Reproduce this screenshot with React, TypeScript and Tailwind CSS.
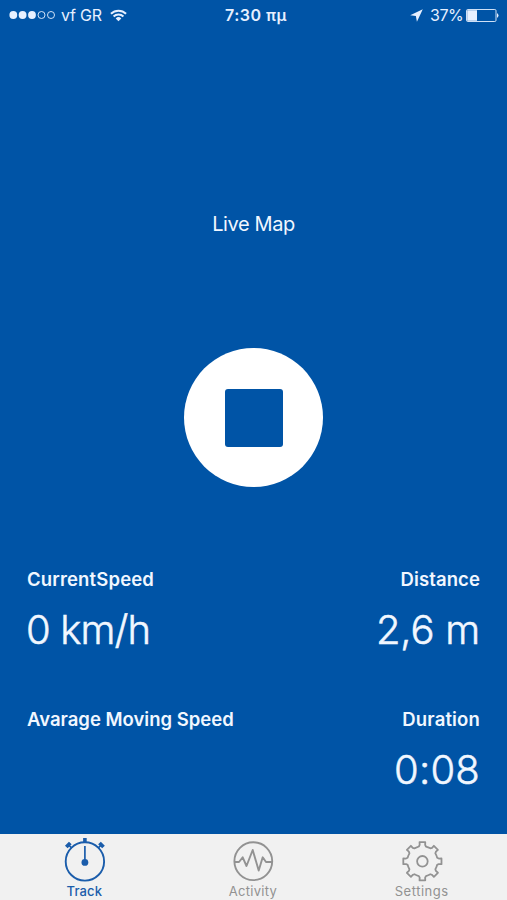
import React from "react";

function gearPath(): string {
  const parts: string[] = [];
  for (let i = 0; i < 8; i++) {
    const base = i * 45 - 90;
    const corners: [number, number][] = [
      [15.2, -13.5],
      [16.6, -9.5],
      [19.3, -8.5],
      [19.3, 8.5],
      [16.6, 9.5],
      [15.2, 13.5],
    ];
    corners.forEach(([r, a], k) => {
      const t = ((base + a) * Math.PI) / 180;
      const x = (22.4 + r * Math.cos(t)).toFixed(2);
      const y = (22.3 + r * Math.sin(t)).toFixed(2);
      const cmd = i === 0 && k === 0 ? "M" : k === 0 ? "A17 17 0 0 1 " : "L";
      parts.push(`${cmd}${x} ${y}`);
    });
  }
  return parts.join(" ") + "Z";
}

const TrackIcon = () => (
  <svg className="h-11 w-11 overflow-visible" viewBox="0 0 44 44" fill="none" stroke="currentColor">
    <circle cx="22.9" cy="22.4" r="19.2" strokeWidth="1.9" />
    <path d="M22.9 -1v4.5" strokeWidth="3.6" />
    <path d="M4.3 8l4-4M41.5 8l-4-4" strokeWidth="3.8" />
    <path d="M7.1 6.5l2.7 2.7M38.7 6.5l-2.7 2.7" strokeWidth="1.7" />
    <path d="M22.9 7v16" strokeWidth="1.7" />
    <circle cx="22.9" cy="23.4" r="3.4" fill="currentColor" stroke="none" />
  </svg>
);

const ActivityIcon = () => (
  <svg className="h-11 w-11" viewBox="0 0 44 44" fill="none" stroke="currentColor" strokeWidth="1.9" strokeLinejoin="round">
    <circle cx="22.3" cy="22.2" r="18.9" />
    <path d="M3.5 23H8L11.7 18.3L15.5 27L21.7 11L27.7 31.5L31.7 18.3L35 23H41.2" />
  </svg>
);

const SettingsIcon = () => (
  <svg className="h-11 w-11" viewBox="0 0 44 44" fill="none" stroke="currentColor" strokeWidth="1.8" strokeLinejoin="round">
    <path d={gearPath()} />
    <circle cx="22.4" cy="22.3" r="5.3" />
  </svg>
);

function StatusBar() {
  return (
    <header className="grid h-[30px] grid-cols-3 items-center pl-[9px] pr-[8px] text-[16px] leading-[30px] text-[#e7f0ff]">
      <div className="flex items-center">
        <svg className="h-[10px] w-[47px]" viewBox="0 0 47 10" fill="currentColor">
          <circle cx="4.3" cy="5" r="3.9" />
          <circle cx="13.6" cy="5" r="3.9" />
          <circle cx="23" cy="5" r="3.9" />
          <g fill="none" stroke="currentColor" strokeWidth="0.9">
            <circle cx="32.5" cy="5" r="3.5" />
            <circle cx="42" cy="5" r="3.5" />
          </g>
        </svg>
        <span className="ml-[5px] w-[41px] whitespace-nowrap tracking-[-0.2px]">vf GR</span>
        <svg className="ml-[8px] h-[13px] w-[17px]" viewBox="0 0 18 13" fill="none" stroke="currentColor" strokeWidth="2.1">
          <path d="M1 4.7A11.3 11.3 0 0 1 17 4.7" />
          <path d="M3.8 7.6A7.3 7.3 0 0 1 14.2 7.6" />
          <path d="M9 12.6L6 9.6A4.3 4.3 0 0 1 12 9.6Z" fill="currentColor" stroke="none" />
        </svg>
      </div>
      <div className="flex justify-center pl-[4px] font-semibold">
        <span className="whitespace-nowrap tracking-[0.5px]">7:30 πμ</span>
      </div>
      <div className="flex items-center justify-end">
        <svg className="h-[13px] w-[13px]" viewBox="0 0 12 12" fill="currentColor">
          <path d="M11.8 0.3L0.2 5.7L5.4 6.5L6.4 11.8Z" />
        </svg>
        <span className="ml-[7px] w-[32px] whitespace-nowrap tracking-[-0.4px]">37%</span>
        <svg className="ml-[4px] h-[13px] w-[33px]" viewBox="0 0 33 13">
          <rect x="0.5" y="0.5" width="29.5" height="12" rx="1.2" fill="none" stroke="currentColor" strokeWidth="0.9" />
          <rect x="1.2" y="1.2" width="9.8" height="10.6" fill="currentColor" />
          <path d="M31 4Q34 6.5 31 9Z" fill="currentColor" />
        </svg>
      </div>
    </header>
  );
}

function Tab({ label, color, icon, className }: { label: string; color: string; icon: React.ReactNode; className: string }) {
  return (
    <div className={`flex flex-1 flex-col items-center pt-[5px] ${color}`}>
      {icon}
      <span className={`-mt-px text-[13px] leading-[18px] ${className}`}>{label}</span>
    </div>
  );
}

export default function App() {
  return (
    <div className="flex h-[900px] w-[507px] flex-col overflow-hidden bg-[#0054a6] font-['Inter','DejaVu_Sans',sans-serif] text-[#f1f7ff]">
      <StatusBar />
      <main className="flex flex-1 flex-col">
        <div className="mt-[179px] text-center text-[20px] leading-[30px] tracking-[-0.4px]">Live Map</div>
        <button className="mt-[109px] flex h-[139px] w-[139px] items-center justify-center self-center rounded-full bg-white">
          <span className="h-[58px] w-[58px] rounded-[3px] bg-[#0054a6]" />
        </button>
        <section className="mt-[77px] flex justify-between px-[27px]">
          <div>
            <div className="h-[30px] text-[18.5px] font-semibold leading-[30px] tracking-[0.15px]">CurrentSpeed</div>
            <div className="-ml-px mt-[11px] text-[40px] font-light leading-[50px] tracking-[-0.9px] [-webkit-text-stroke:0.5px_currentColor]">0 km/h</div>
          </div>
          <div className="text-right">
            <div className="h-[30px] text-[18.5px] font-semibold leading-[30px] tracking-[0.1px]">Distance</div>
            <div className="mt-[11px] text-[40px] font-light leading-[50px] tracking-[-0.2px] [-webkit-text-stroke:0.5px_currentColor]">2,6 m</div>
          </div>
        </section>
        <section className="mt-[49px] flex justify-between px-[27px]">
          <div className="h-[30px] text-[18.5px] font-semibold leading-[30px]">Avarage Moving Speed</div>
          <div className="text-right">
            <div className="h-[30px] text-[18.5px] font-semibold leading-[30px] tracking-[0.15px]">Duration</div>
            <div className="mt-[11px] text-[40px] font-light leading-[50px] tracking-[0.2px] [-webkit-text-stroke:0.5px_currentColor]">0:08</div>
          </div>
        </section>
      </main>
      <nav className="flex h-[66px] shrink-0 bg-[#f1f1f1] pr-px">
        <Tab label="Track" color="text-[#1b5dab]" icon={<TrackIcon />} className="font-medium tracking-[0.15px]" />
        <Tab label="Activity" color="text-[#929292]" icon={<ActivityIcon />} className="tracking-[0.3px]" />
        <Tab label="Settings" color="text-[#929292]" icon={<SettingsIcon />} className="tracking-[0.5px]" />
      </nav>
    </div>
  );
}
